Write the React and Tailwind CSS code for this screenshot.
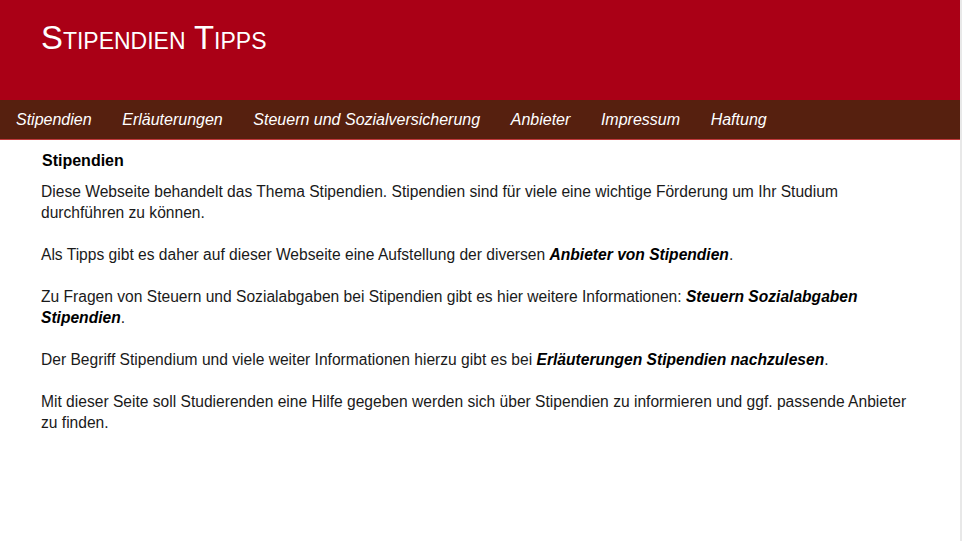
export default function App() {
  const nav = ['Stipendien', 'Erläuterungen', 'Steuern und Sozialversicherung', 'Anbieter', 'Impressum', 'Haftung'];

  return (
    <div className="flex min-h-[541px] bg-[#e8e8e8]" style={{ fontFamily: '"Liberation Sans", Arial, sans-serif' }}>
      <div className="w-[960px] bg-white">
        {/* Header */}
        <div className="h-[100px] bg-[#aa0016] px-[41px] pt-[18px]">
          <h1 className="text-[32.8px] leading-[40px] text-white [font-variant:small-caps]">Stipendien Tipps</h1>
        </div>

        {/* Navigation */}
        <nav className="flex h-[40px] items-center gap-[30.6px] border-b border-[#c0393b] bg-[#56200f] px-[16px]">
          {nav.map((item) => (
            <a key={item} className="text-[16px] italic text-white">{item}</a>
          ))}
        </nav>

        {/* Content */}
        <div className="pl-[41px] pr-[40px] pt-[10px] text-[15.6px] leading-[21px] text-[#1a1a1a]">
          <h2 className="mb-[10px] ml-px text-[16px] font-bold leading-[21px] text-black">Stipendien</h2>
          <p className="mb-[21px]">
            Diese Webseite behandelt das Thema Stipendien. Stipendien sind für viele eine wichtige Förderung um Ihr Studium durchführen zu können.
          </p>
          <p className="mb-[21px]">
            Als Tipps gibt es daher auf dieser Webseite eine Aufstellung der diversen <a className="font-bold italic text-black">Anbieter von Stipendien</a>.
          </p>
          <p className="mb-[21px]">
            Zu Fragen von Steuern und Sozialabgaben bei Stipendien gibt es hier weitere Informationen: <a className="font-bold italic text-black">Steuern Sozialabgaben Stipendien</a>.
          </p>
          <p className="mb-[21px]">
            Der Begriff Stipendium und viele weiter Informationen hierzu gibt es bei <a className="font-bold italic text-black">Erläuterungen Stipendien nachzulesen</a>.
          </p>
          <p className="mb-[21px]">
            Mit dieser Seite soll Studierenden eine Hilfe gegeben werden sich über Stipendien zu informieren und ggf. passende Anbieter zu finden.
          </p>
        </div>
      </div>
    </div>
  );
}
